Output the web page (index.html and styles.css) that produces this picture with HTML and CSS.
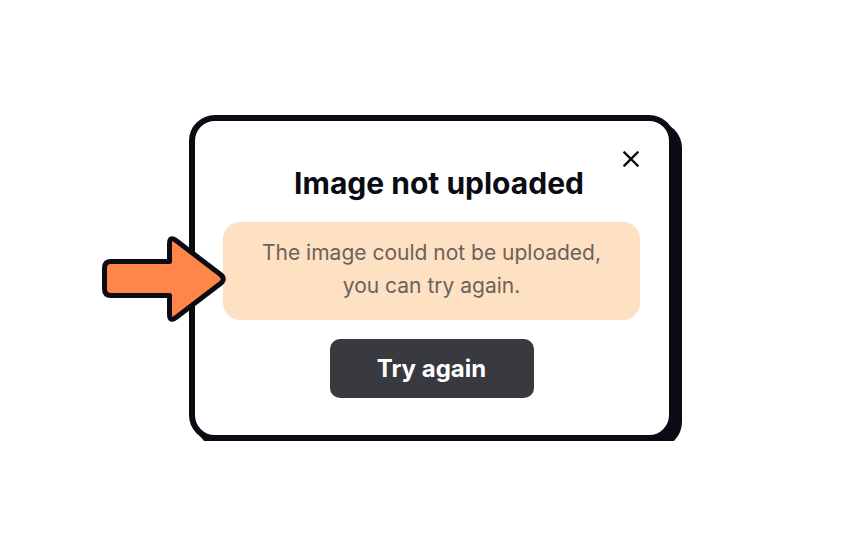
FILE: index.html
```html
<!DOCTYPE html>
<html lang="en">
<head>
<meta charset="utf-8">
<title>Image not uploaded</title>
<link rel="stylesheet" href="styles.css">
</head>
<body>
<div class="stage">
  <div class="card">
    <button class="close" aria-label="Close">
      <svg viewBox="0 0 16 16" width="16" height="16"><path d="M1.5 1.5 L14.5 14.5 M14.5 1.5 L1.5 14.5" stroke="#0b0b14" stroke-width="2.4" stroke-linecap="square" fill="none"/></svg>
    </button>
    <h1 class="title">Image not uploaded</h1>
    <div class="notice">
      <p>The image could not be uploaded,<br>you can try again.</p>
    </div>
    <button class="retry">Try again</button>
    <svg class="arrow" viewBox="100 233 128 92" width="128" height="92">
      <path d="M111,261.5 H169.5 V244 Q169.5,235.5 176,240.5 L220.5,274.5 Q226,279 220.5,283.5 L176,317.5 Q169.5,322.5 169.5,314 V295.5 H111 Q104.5,295.5 104.5,289 V268 Q104.5,261.5 111,261.5 Z" fill="#ff8548" stroke="#0b0b14" stroke-width="5" stroke-linejoin="round"/>
    </svg>
  </div>
</div>
</body>
</html>
```
FILE: styles.css
```css
html, body {
  margin: 0;
  padding: 0;
  background: #ffffff;
}
body {
  font-family: Inter, "Noto Sans", sans-serif;
}
.stage {
  display: flex;
  justify-content: center;
  padding-top: 115px;
}
.card {
  position: relative;
  box-sizing: border-box;
  width: 486px;
  height: 326px;
  border: 6px solid #0b0b14;
  border-radius: 26px;
  box-shadow: 7px 7px 0 #0b0b14;
  background: #ffffff;
  padding: 45px 29px 0 28px;
  display: flex;
  flex-direction: column;
  align-items: center;
}
.close {
  position: absolute;
  top: 30px;
  right: 30px;
  width: 16px;
  height: 16px;
  padding: 0;
  border: 0;
  background: none;
  display: flex;
}
.title {
  margin: 0;
  padding-left: 15px;
  font-size: 30px;
  line-height: 34px;
  font-weight: 700;
  color: #0b0b14;
}
.notice {
  margin-top: 22px;
  align-self: stretch;
  background: #fee0c3;
  border-radius: 17px;
  padding: 14px 10px 18px;
}
.notice p {
  margin: 0;
  text-align: center;
  font-size: 21px;
  line-height: 33px;
  color: #6b625c;
}
.retry {
  margin-top: 19px;
  width: 204px;
  height: 59px;
  border: 0;
  border-radius: 10px;
  background: #393940;
  color: #ffffff;
  font-family: Inter, "Noto Sans", sans-serif;
  font-weight: 700;
  font-size: 24px;
}
.arrow {
  position: absolute;
  left: -95px;
  top: 112px;
}
```
